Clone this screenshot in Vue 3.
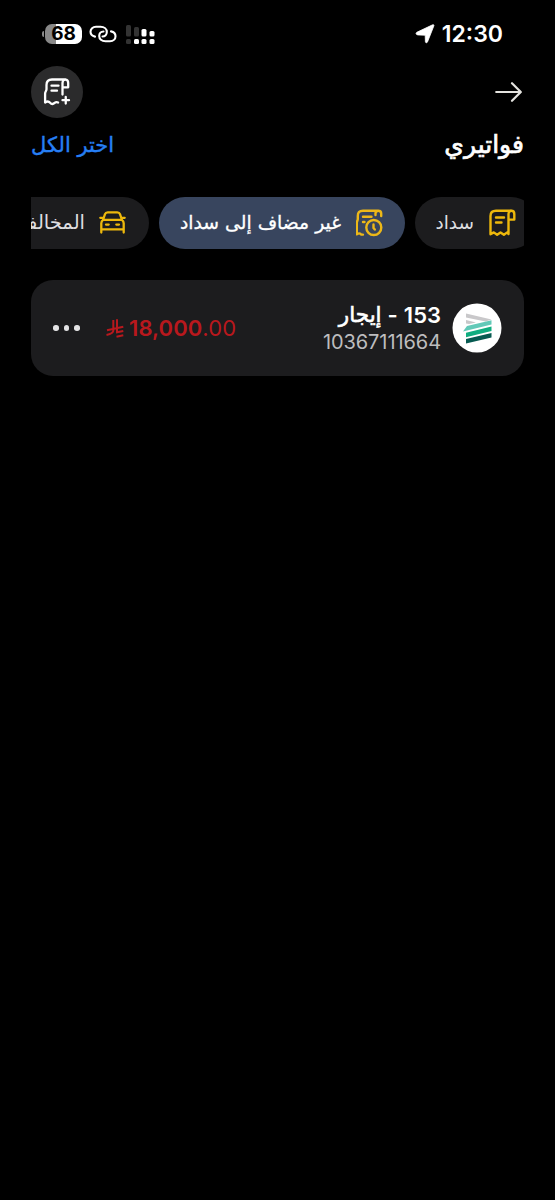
<script setup>
const tabs = [
  { id: 'sadad', label: 'سداد' },
  { id: 'unlisted', label: 'غير مضاف إلى سداد', active: true },
  { id: 'traffic', label: 'المخالفات' },
]
</script>

<template>
  <main class="screen" dir="rtl">
    <header class="status">
      <div class="clock">
        <span class="time" dir="ltr">12:30</span>
        <svg width="20" height="20" viewBox="0 0 20 20"><path d="M17.6.8c1-.4 1.6.2 1.2 1.2l-6.3 15.900c-.5 1.200-2 1.100-2.100-.2l-.2-6.500-7.400-.3C.8 10.700.6 9 1.800 8.300z" fill="#fff" stroke="#fff" stroke-width=".8" stroke-linejoin="round" /></svg>
      </div>
      <div class="device">
        <svg class="signal" width="29" height="20" viewBox="0 0 29 20">
          <g fill="#333"><rect x="0" y="0" width="5" height="11.500" rx="1.5" /><rect x="8" y="2" width="5" height="9.500" rx="1.5" /><rect x="0" y="14" width="5" height="5" rx="1.5" /></g>
          <g fill="#fff"><rect x="15.500" y="4" width="5" height="7.500" rx="1.5" /><rect x="23.500" y="6" width="5" height="5.500" rx="1.5" /><rect x="8" y="14" width="5" height="5" rx="1.5" /><rect x="15.500" y="14" width="5" height="5" rx="1.5" /><rect x="23.500" y="14" width="5" height="5" rx="1.5" /></g>
        </svg>
        <svg class="link" width="28" height="18" viewBox="0 0 28 18" fill="none" stroke="#fff" stroke-width="2.100" stroke-linecap="round"><path d="M6 11.600C3.200 11 1.500 9.200 1.500 6.800c0-3 2.300-5 5.500-5h4.500c3.800 0 6.300 2.200 6.300 5.200 0 2.500-1.700 4.500-4.300 4.500" /><path d="M22 6.400c2.800.6 4.500 2.400 4.500 4.800 0 3-2.300 5-5.500 5h-4.500c-3.800 0-6.300-2.200-6.300-5.200 0-2.500 1.700-4.500 4.300-4.500" /></svg>
        <div class="battery">68</div>
      </div>
    </header>

    <nav class="toolbar">
      <svg class="arrow" width="28" height="22" viewBox="0 0 28 22" fill="none" stroke="#e4e3df" stroke-width="2.200" stroke-linecap="round" stroke-linejoin="round"><path d="M1.200 11h24.500M17 2.200 25.800 11 17 19.800" /></svg>
      <button class="add">
        <svg width="30" height="30" viewBox="0 0 30 30" fill="none" stroke="#fff" stroke-width="2.300" stroke-linecap="round" stroke-linejoin="round"><path d="M20.500 17.500V6c0-4.500 5.700-4.500 5.700 0v4.300h-5M23.500 2.500H10C6 2.500 4.500 4.200 4.500 8v4.300c0 1.700-1.400 2.200-1.400 4.200V25.500c2-1.500 3.500-1.500 5 .2 1.500 1.700 3 1.700 4.500.2 1.200-1 2.200-1.100 3.500-.4M9.500 8.700h7M9.500 13.700h5.500M20.500 23.200h6.500M23.750 20v6.500" /></svg>
      </button>
    </nav>

    <div class="heading">
      <h1><span>فواتيري</span></h1>
      <button class="select"><span>اختر الكل</span></button>
    </div>

    <div class="tabs">
      <button v-for="tab in tabs" :key="tab.id" class="tab" :class="[tab.id, { active: tab.active }]">
        <svg v-if="tab.id === 'sadad'" width="28" height="28" viewBox="0 0 28 28" fill="none" stroke="#edb80c" stroke-width="2.400" stroke-linejoin="round" stroke-linecap="round"><path d="M23 1.800H8C4.500 1.800 2.500 3.500 2.500 7v18.300l3.300-1.900 3.300 2.400 3.400-2.400 3.400 2.400 3.300-2.400 1.300 1.600V5c0-4.300 5.800-4.300 5.800 0v5.600h-5.800M8 8.500h8M8 13.500h5.500" /></svg>
        <svg v-else-if="tab.id === 'unlisted'" width="28" height="28" viewBox="0 0 28 28" fill="none" stroke="#edb818" stroke-width="2.400" stroke-linejoin="round" stroke-linecap="round"><path d="M22.500 1.800H7C3 1.800 1.800 3.500 1.800 7v3c0 1.500-1 2-1 4v11.300c1.300-.8 2.300-1.500 3.600-.5.8.8 1.500 1 2.500.8M19.500 6V4.500c0-3.600 5.700-3.600 5.700 0V7M7 7.800h8.500M7 13h1.500" /><circle cx="17.800" cy="18.500" r="7.500" /><path d="M17.500 15.500v3.500l1.300 1.500" /></svg>
        <svg v-else width="28" height="28" viewBox="0 0 28 28" fill="none" stroke="#edb80c" stroke-width="2.300" stroke-linejoin="round" stroke-linecap="round"><path d="m4 11 2-5.800c.5-1.400 1.300-1.800 2.700-1.800h9.600c1.400 0 2.200.4 2.700 1.800l2 5.800M4 10.800h19c1 .8 1.700 2 1.700 3.500v6H2.300v-6c0-1.500.7-2.700 1.700-3.500M2.300 20v3.500M24.700 20v3.500M1.300 8.800H3.500M23.500 8.800h2.200M7 15.600h2.700M17.300 15.600H20" /></svg>
        <span>{{ tab.label }}</span>
      </button>
    </div>

    <article class="bill">
      <svg class="logo" width="50" height="50" viewBox="0 0 50 50"><circle cx="25" cy="25" r="24.500" fill="#fff" /><path d="m14 10.500 25.500 6-6 2L14 14.600z" fill="#c9c8ca" /><path d="m14 17 10 2.400-7 1.700-3-.7z" fill="#c9c8ca" /><path d="m15 23 24.500-5.700v4.200L11 28.500z" fill="#62c9b8" /><path d="m14 29.800 25.500-6.200v4.400L14 34.300z" fill="#10ad80" /><path d="m14 36 25.500-6v4.400L14 40.500z" fill="#075a51" /></svg>
      <div class="details">
        <div class="name"><span class="latin">153</span><span class="dash">-</span><span class="word">إيجار</span></div>
        <div class="number">10367111664</div>
      </div>
      <div class="amount" dir="ltr">
        <svg width="18" height="19" viewBox="0 0 18 19" fill="none" stroke="#b9181d" stroke-width="2"><path d="M7.300 1v10.800c0 2.200-1.800 3-6.800 4.100M11 .3v13l6.300-1.400M1 11.300 17.300 7.800M10.500 17.700l6.800-1.500" /></svg>
        <span class="sum"><b>18,000</b>.00</span>
      </div>
      <button class="more"><i></i><i></i><i></i></button>
    </article>
  </main>
</template>

<style>
html, body { background: #000; }
</style>
<style scoped>
* { box-sizing: border-box; }
.screen { width: 555px; height: 1200px; padding: 0 31px; overflow: hidden; background: #000; color: #fff; font-family: Inter, "DejaVu Sans", sans-serif; }
button { padding: 0; border: 0; background: none; color: inherit; font: inherit; }
svg { display: block; flex: none; }
span { white-space: nowrap; }
.status { height: 66px; padding: 2px 21px 0 14px; display: flex; align-items: center; justify-content: space-between; }
.clock { display: flex; align-items: center; gap: 7px; }
.time { font-size: 23px; font-weight: 600; line-height: 28px; }
.device { display: flex; align-items: center; margin-right: -1px; }
.signal { margin-bottom: -1px; }
.link { margin: 0 9px 0 7px; }
.battery { position: relative; width: 37px; height: 20px; margin-bottom: 1px; border-radius: 7px; background: linear-gradient(90deg, #888 30%, #fff 30%); color: #000; font: 700 19px/20px Inter, sans-serif; text-align: center; }
.battery::before { content: ''; position: absolute; left: -3px; top: 7px; width: 2px; height: 6px; border-radius: 2px 0 0 2px; background: #888; }
.toolbar { height: 52px; display: flex; align-items: center; justify-content: space-between; }
.arrow { margin-right: 1px; }
.add { width: 52px; height: 52px; border-radius: 50%; background: #2b2b2c; display: grid; place-items: center; }
.heading { height: 79px; display: flex; justify-content: space-between; align-items: flex-start; }
h1 { margin: 10px 0 0; font: 400 25px/34px "DejaVu Sans", sans-serif; -webkit-text-stroke: .7px #fff; }
.select { margin-top: 11px; color: #267ff5; font: 400 21px/32px "DejaVu Sans", sans-serif; -webkit-text-stroke: .4px #267ff5; }
.tabs { height: 52px; display: flex; gap: 10px; overflow: hidden; }
.tab { flex: none; height: 52px; padding-right: 21px; border-radius: 26px; background: #1c1c1e; color: #dedee0; display: flex; align-items: center; gap: 14px; font: 400 18.500px/30px "DejaVu Sans", sans-serif; }
.sadad { width: 122px; margin-right: -13px; }
.unlisted { width: 246px; gap: 15px; font-size: 18.800px; }
.traffic { width: 170px; padding-right: 22px; font-size: 19.500px; }
.active { background: #38455e; color: #fff; -webkit-text-stroke: .3px #fff; }
.bill { height: 96px; margin-top: 31px; padding: 0 22px; border-radius: 22px; background: #1c1c1e; display: flex; align-items: center; }
.details { width: 118px; margin-right: 11px; }
.name { height: 26px; display: flex; align-items: center; gap: 6px; font-size: 22px; font-weight: 600; }
.word { font: 400 21.500px/26px "DejaVu Sans", sans-serif; -webkit-text-stroke: .6px #fff; }
.number { height: 26px; font-size: 20px; line-height: 28px; color: #bdbdbf; letter-spacing: -.08px; }
.amount { margin-right: 86px; width: 131px; display: flex; align-items: center; gap: 5px; color: #b9181d; }
.sum { font-size: 22px; line-height: 28px; letter-spacing: .08px; }
.sum b { font-weight: 600; }
.more { margin-right: auto; display: flex; gap: 5px; }
.more i { width: 5.500px; height: 5.500px; border-radius: 50%; background: #e3e3e5; }
</style>
